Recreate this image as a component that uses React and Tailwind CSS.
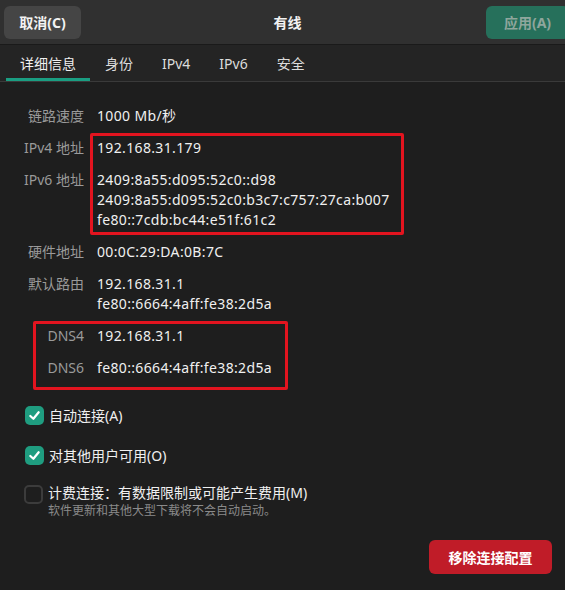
const details = [
  { label: "链路速度", values: ["1000 Mb/秒"] },
  { label: "IPv4 地址", values: ["192.168.31.179"] },
  {
    label: "IPv6 地址",
    values: [
      "2409:8a55:d095:52c0::d98",
      "2409:8a55:d095:52c0:b3c7:c757:27ca:b007",
      "fe80::7cdb:bc44:e51f:61c2",
    ],
  },
  { label: "硬件地址", values: ["00:0C:29:DA:0B:7C"] },
  { label: "默认路由", values: ["192.168.31.1", "fe80::6664:4aff:fe38:2d5a"] },
  { label: "DNS4", values: ["192.168.31.1"] },
  { label: "DNS6", values: ["fe80::6664:4aff:fe38:2d5a"] },
];

const tabs = ["详细信息", "身份", "IPv4", "IPv6", "安全"];

function Check({ checked }) {
  if (!checked) {
    return (
      <div className="w-[19px] h-[19px] rounded-[5px] border-2 border-[#3c3c3c] shrink-0" />
    );
  }
  return (
    <div className="w-[19px] h-[19px] rounded-[5px] bg-[#1f9d80] flex items-center justify-center shrink-0">
      <svg width="13" height="13" viewBox="0 0 14 14" fill="none">
        <path
          d="M2.5 7.5 L5.8 10.5 L11.5 3.5"
          stroke="white"
          strokeWidth="2.4"
          strokeLinecap="round"
          strokeLinejoin="round"
        />
      </svg>
    </div>
  );
}

export default function App() {
  return (
    <div
      className="w-[565px] h-[590px] overflow-hidden bg-[#1e1e1e] text-white flex flex-col"
      style={{ fontFamily: '"Noto Sans", "Noto Sans CJK SC", sans-serif' }}
    >
      {/* HEADER */}
      <div className="h-[45px] bg-[#303030] border-b border-[#1a1a1a] grid grid-cols-[1fr_auto_1fr] items-center px-[4px] shrink-0">
        <div>
          <button className="w-[77px] h-[33px] rounded-[6px] bg-[#454545] text-[14px] font-bold text-[#f2f2f2]">
            取消(C)
          </button>
        </div>
        <div className="text-[14px] font-bold text-[#f2f2f2] pl-[10px]">有线</div>
        <div className="flex justify-end">
          <button className="w-[83px] h-[33px] rounded-[6px] bg-[#26705b] text-[14px] font-bold text-[#8fa69d] mr-[-8px]">
            应用(A)
          </button>
        </div>
      </div>

      {/* TABS */}
      <div className="h-[37px] bg-[#242424] border-b border-[#3a3a3a] flex items-stretch gap-[1px] pl-[6px] shrink-0">
        {tabs.map((t, i) => (
          <div
            key={t}
            className={`px-[14px] flex items-center text-[14px] border-b-[3px] ${
              i === 0 ? "border-[#1a9e82] text-[#f0f0f0]" : "border-transparent text-[#dcdcdc]"
            }`}
          >
            <span className="mt-[3px]">{t}</span>
          </div>
        ))}
      </div>

      {/* DETAILS */}
      <div className="relative pt-[24px] pl-[24px]">
        <div className="grid grid-cols-[60px_1fr] gap-x-[13px] gap-y-[12px] text-[14px] leading-[20px]">
          {details.map((d) => (
            <div key={d.label} className="contents">
              <div className="text-right text-[#9a9a9a] whitespace-nowrap">{d.label}</div>
              <div className="text-[#f0f0f0] tracking-[0.35px]">
                {d.values.map((v) => (
                  <div key={v}>{v}</div>
                ))}
              </div>
            </div>
          ))}
        </div>

        {/* highlight boxes */}
        <div className="absolute left-[90px] top-[51px] w-[314px] h-[102px] border-[3px] border-[#e3141f] rounded-[2px]" />
        <div className="absolute left-[33px] top-[239px] w-[255px] h-[69px] border-[3px] border-[#e3141f] rounded-[2px]" />
      </div>

      {/* OPTIONS */}
      <div className="flex flex-col pl-[25px] mt-[27px] text-[14px] text-[#f0f0f0]">
        <label className="flex items-center gap-[5px] h-[20px]">
          <Check checked />
          <span>自动连接(A)</span>
        </label>
        <label className="flex items-center gap-[5px] h-[20px] mt-[20px]">
          <Check checked />
          <span>对其他用户可用(O)</span>
        </label>
        <div className="flex items-start gap-[5px] mt-[18px]">
          <div className="mt-[2px] -ml-[1px]">
            <Check />
          </div>
          <div>
            <div className="leading-[20px]">计费连接：有数据限制或可能产生费用(M)</div>
            <div className="text-[12px] leading-[16px] text-[#8a8a8a]">
              软件更新和其他大型下载将不会自动启动。
            </div>
          </div>
        </div>
      </div>

      <div className="flex justify-end pr-[13px] mt-[21px]">
        <button className="w-[123px] h-[34px] rounded-[6px] bg-[#c01c28] text-[14px] font-bold text-white">
          移除连接配置
        </button>
      </div>
    </div>
  );
}
